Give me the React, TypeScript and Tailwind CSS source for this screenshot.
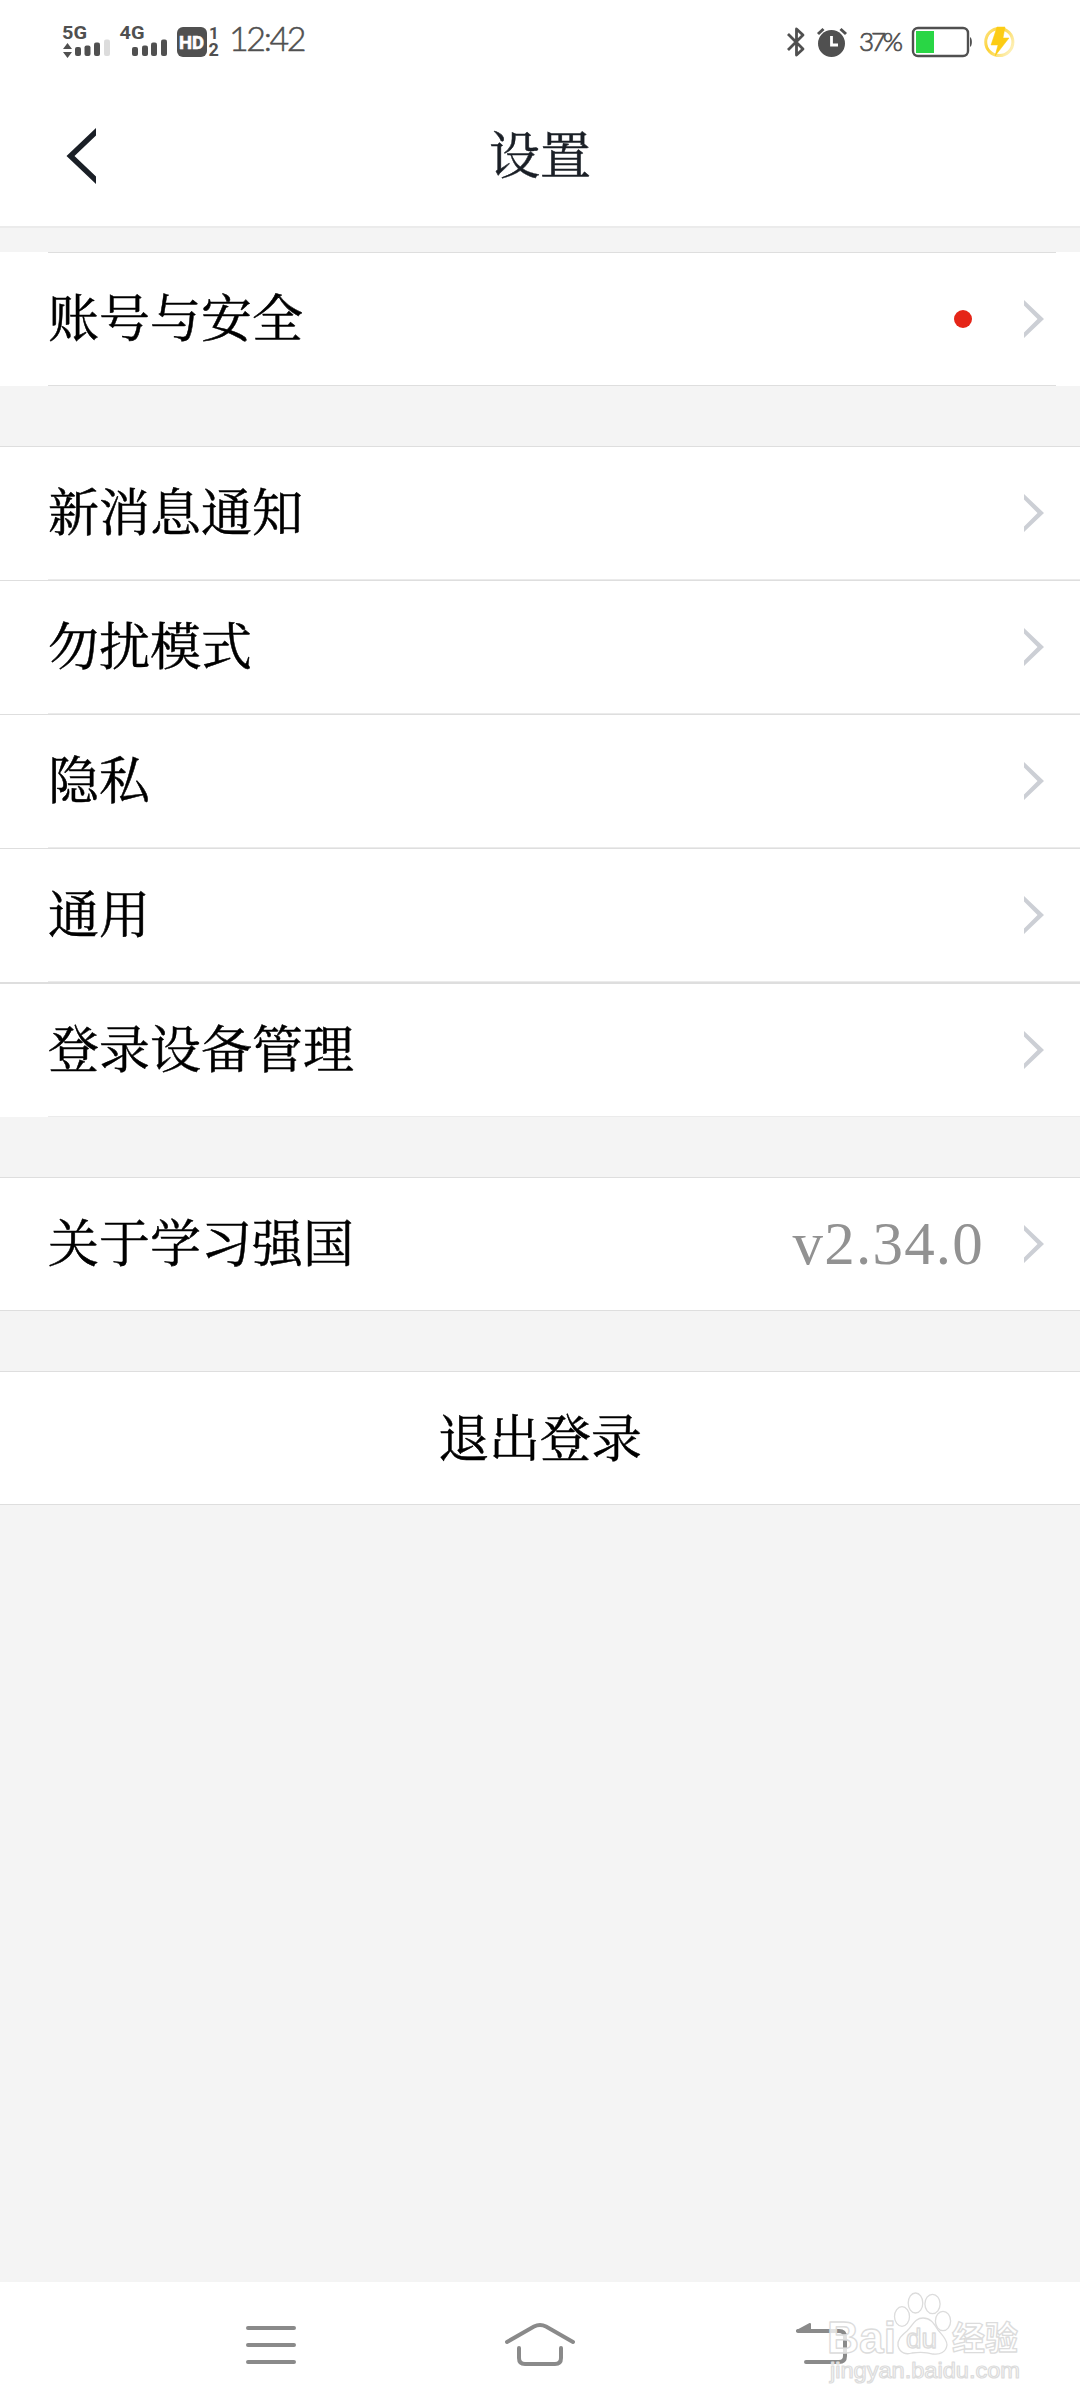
import React from 'react';
import clsx from 'clsx';

interface RowProps {
  label: string;
  value?: string;
  dot?: boolean;
  className?: string;
}

const RowArrow: React.FC = () => (
  <svg width="20" height="38" viewBox="0 0 20 38" className="shrink-0">
    <path d="M0 0L20 19L0 38V32.5L13.5 19L0 5.5Z" fill="#cccfd5" />
  </svg>
);

const SettingRow: React.FC<RowProps> = ({ label, value, dot, className }) => (
  <div className={clsx('relative flex h-[134px] items-center bg-white pl-12 pr-9', className)}>
    <span className="pb-[8px] text-[51px] leading-[60px] text-black [-webkit-text-stroke:0.5px_#000]">{label}</span>
    <div className="ml-auto flex items-center">
      {value && (
        <span className="mr-[40px] font-['Liberation_Serif',serif] text-[61px] leading-[60px] tracking-[1.2px] text-[#929292]">
          {value}
        </span>
      )}
      {dot && <span className="mr-[52px] h-[18px] w-[18px] rounded-full bg-[#e52518]" />}
      <RowArrow />
    </div>
  </div>
);

// thin line that starts at the label's left edge
const InsetLine: React.FC<{ className?: string }> = ({ className }) => (
  <div className={clsx('absolute left-12 h-px', className)} />
);

const StatusBar: React.FC = () => (
  <div className="flex h-[84px] items-start bg-white pl-[58px] pr-[64px] pt-[16px] text-[#505050]">
    <svg width="166" height="52" viewBox="58 16 166 52" fill="#505050" fontFamily="Roboto, sans-serif" fontWeight="700">
      <text x="62" y="39" fontSize="19" textLength="25" lengthAdjust="spacingAndGlyphs">5G</text>
      <path d="M67.5 43L72 49H63ZM67.5 58L72 52H63Z" />
      <rect x="75" y="47" width="6" height="9" rx="2" />
      <rect x="84.5" y="45.5" width="6" height="10.5" rx="2" />
      <rect x="94" y="42.5" width="6" height="13.5" rx="2" />
      <rect x="104" y="39.5" width="6" height="16.5" rx="2" fill="#dcdcdc" />
      <text x="119.5" y="39" fontSize="19" textLength="25" lengthAdjust="spacingAndGlyphs">4G</text>
      <rect x="132" y="47" width="6" height="9" rx="2" />
      <rect x="142" y="45.5" width="6" height="10.5" rx="2" />
      <rect x="151" y="42.5" width="6" height="13.5" rx="2" />
      <rect x="161" y="39.5" width="6" height="16.5" rx="2" />
      <rect x="177" y="27" width="30" height="30" rx="6" />
      <text x="179" y="48.5" fontSize="19" textLength="25" lengthAdjust="spacingAndGlyphs" fill="#fff" stroke="#fff" strokeWidth="0.6">HD</text>
      <text x="209" y="39" fontSize="17">1</text>
      <text x="208.5" y="56" fontSize="18">2</text>
    </svg>
    <span className="ml-[5px] mt-[3px] font-['Lato',sans-serif] text-[34px] font-light leading-[38px] tracking-[-2.4px] [-webkit-text-stroke:0.5px_#505050]">
      12:42
    </span>

    <svg width="62" height="52" viewBox="786 16 62 52" className="ml-auto" fill="none" stroke="#505050">
      <path d="M788 34L803 49L796.5 55V29L803 35L788 50" strokeWidth="2.8" strokeLinejoin="round" />
      <circle cx="831.5" cy="43.5" r="13.5" fill="#505050" stroke="none" />
      <path d="M818 34L823.5 29M846 34L840.5 29" strokeWidth="3" />
      <path d="M831.5 36V45H838" stroke="#fff" strokeWidth="2.8" />
    </svg>
    <span className="ml-[11px] mt-[9px] w-[43px] whitespace-nowrap font-['Lato',sans-serif] text-[26px] font-light leading-[32px] tracking-[-3.2px] [-webkit-text-stroke:0.7px_#505050]">
      37%
    </span>
    <svg width="106" height="52" viewBox="910 16 106 52" className="ml-[8px]">
      <defs>
        <linearGradient id="ring" x1="0" y1="0" x2="1" y2="0.6">
          <stop offset="0" stopColor="#fde48a" />
          <stop offset="0.4" stopColor="#fcd235" />
          <stop offset="1" stopColor="#fdeeb0" />
        </linearGradient>
      </defs>
      <rect x="913" y="28" width="55" height="28" rx="5" fill="#fff" stroke="#505050" strokeWidth="2.4" />
      <rect x="916" y="31" width="18" height="22" fill="#29d645" />
      <path d="M970 37C972.5 38 972.5 46 970 47Z" fill="#505050" />
      <circle cx="999.3" cy="42" r="13.6" fill="none" stroke="url(#ring)" strokeWidth="3" />
      <path d="M997 27H1005L1003 38H1009L995 56L998 45H991Z" fill="#fccc14" stroke="#fccc14" strokeWidth="0.5" />
    </svg>
  </div>
);

const NavBar: React.FC = () => (
  <div className="relative grid h-[126px] grid-cols-3 items-center justify-items-center bg-white px-[136px]">
    <svg width="100" height="60" viewBox="221 2315 100 60" fill="none" stroke="#8a8a8a" strokeWidth="4" strokeLinecap="round">
      <path d="M248 2328H294M248 2345H294M248 2362H294" />
    </svg>
    <svg width="100" height="60" viewBox="491 2315 100 60" fill="none" stroke="#8a8a8a" strokeWidth="4" strokeLinecap="round">
      <path d="M508 2342L535 2326.500Q541 2323.300 547 2326.500L574 2342" />
      <path d="M520 2348V2358Q520 2364 526 2364H556Q562 2364 562 2358V2348" />
    </svg>
    <svg width="100" height="60" viewBox="761 2315 100 60" fill="none" stroke="#8a8a8a" strokeWidth="4" strokeLinecap="round">
      <path d="M800 2331H841Q847 2331 847 2337V2356Q847 2362 841 2362H808" />
      <path d="M799 2331L812 2324V2331Z" fill="#8a8a8a" strokeWidth="2" strokeLinejoin="round" />
    </svg>

    {/* Watermark */}
    <svg
      width="210"
      height="104"
      viewBox="820 2286 210 104"
      className="absolute left-[820px] top-[4px]"
      fill="#fff"
      fillOpacity="0.75"
      stroke="#dcdcdc"
      strokeWidth="1.3"
      strokeLinejoin="round"
      fontFamily="'Liberation Sans', 'Noto Sans CJK SC', sans-serif"
      fontWeight="700"
    >
      <text x="827" y="2352.500" fontSize="44" textLength="69" lengthAdjust="spacingAndGlyphs">Bai</text>
      <ellipse cx="902" cy="2316.500" rx="7.500" ry="9.800" />
      <ellipse cx="915.500" cy="2303" rx="7.300" ry="10" />
      <ellipse cx="932.500" cy="2304" rx="7.600" ry="9.600" />
      <ellipse cx="943" cy="2321" rx="7.600" ry="9.600" />
      <path d="M923 2318C915 2318 913 2325 907 2331C901 2336 897 2340 898 2346C900 2353 906 2355 912 2353C919 2352 926 2352 933 2354C940 2355 946 2352 947 2345C947 2339 942 2335 938 2330C934 2324 931 2318 923 2318Z" />
      <text x="906" y="2348" fontSize="28" fontWeight="400" textLength="31" lengthAdjust="spacingAndGlyphs" strokeWidth="1.5">du</text>
      <text x="952" y="2350" fontSize="33" textLength="66" lengthAdjust="spacingAndGlyphs">经验</text>
      <text x="830" y="2378" fontSize="22" fontWeight="400" textLength="190" lengthAdjust="spacingAndGlyphs" strokeWidth="1.2">jingyan.baidu.com</text>
    </svg>
  </div>
);

const App: React.FC = () => {
  return (
    <div className="flex h-[2408px] w-[1080px] flex-col overflow-hidden bg-[#f4f4f4] font-['Noto_Serif_CJK_SC','Noto_Serif_SC','Source_Han_Serif_SC','Liberation_Serif','Noto_Sans_CJK_SC',serif]">
      <StatusBar />

      {/* Header */}
      <header className="flex h-[144px] shrink-0 items-center border-b-2 border-[#ebebeb] bg-white pl-[66px] pr-[96px] pt-0.5">
        <svg width="30" height="56" viewBox="0 0 30 56">
          <path d="M30 0L0.500 28L30 56V48.500L8.500 28L30 7.500Z" fill="#1a1f26" />
        </svg>
        <h1 className="flex-1 pb-[8px] text-center text-[51px] leading-[60px] text-[#1a1f26] [-webkit-text-stroke:0.5px_#1a1f26]">
          设置
        </h1>
      </header>

      <section className="relative mt-6">
        <SettingRow label="账号与安全" dot />
        <InsetLine className="right-6 top-0 bg-[#dedede]" />
        <InsetLine className="bottom-0 right-6 bg-[#dedede]" />
      </section>

      <section className="mt-[60px]">
        {['新消息通知', '勿扰模式', '隐私', '通用'].map(label => (
          <div key={label} className="relative">
            <SettingRow label={label} className="border-t border-[#dedede] pb-px" />
            <InsetLine className="bottom-0 right-0 bg-[#ebebeb]" />
          </div>
        ))}
        <div className="relative">
          <SettingRow label="登录设备管理" className="h-[135px] border-t-2 border-[#dedede] pb-px" />
          <InsetLine className="bottom-0 right-0 bg-[#ebebeb]" />
        </div>
      </section>

      <section className="mt-[60px]">
        <SettingRow label="关于学习强国" value="v2.34.0" className="border-y border-[#dedede]" />
      </section>

      <button className="mt-[60px] flex h-[134px] shrink-0 items-center justify-center border-y border-[#dedede] bg-white pb-[7px] text-[51px] leading-[60px] text-black [-webkit-text-stroke:0.5px_#000]">
        退出登录
      </button>

      <div className="mt-auto">
        <NavBar />
      </div>
    </div>
  );
};

export default App;
